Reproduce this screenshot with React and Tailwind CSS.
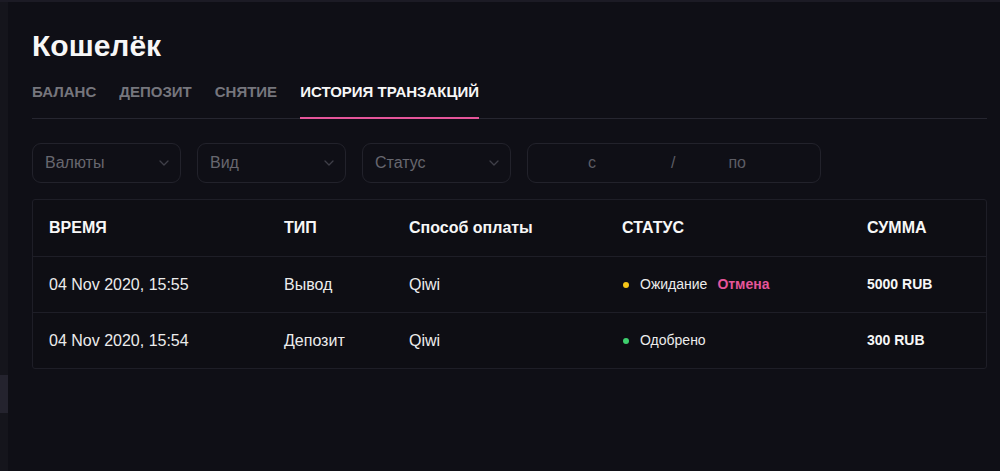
import React from "react";

function Chevron() {
  return (
    <svg width="10" height="6" viewBox="0 0 10 6" fill="none" className="shrink-0">
      <path d="M1 1l4 4 4-4" stroke="#3f3f48" strokeWidth="1.3" strokeLinecap="round" strokeLinejoin="round" />
    </svg>
  );
}

function Select({ label }) {
  return (
    <div className="w-[149px] h-10 rounded-[9px] border border-[#22222b] flex items-center justify-between pl-3 pr-[11px]">
      <span className="text-[16px] text-[#67676f]">{label}</span>
      <Chevron />
    </div>
  );
}

const rows = [
  { time: "04 Nov 2020, 15:55", type: "Вывод", method: "Qiwi", status: "Ожидание", dot: "bg-[#f5c518]", cancel: true, sum: "5000 RUB" },
  { time: "04 Nov 2020, 15:54", type: "Депозит", method: "Qiwi", status: "Одобрено", dot: "bg-[#3ecf6e]", cancel: false, sum: "300 RUB" },
];

export default function App() {
  return (
    <div
      className="w-[1000px] h-[471px] bg-[#0f0f16] flex flex-col overflow-hidden"
      style={{ fontFamily: '"Liberation Sans", Arial, sans-serif' }}
    >
      <div className="h-[2px] bg-[#1c1b25] shrink-0" />
      <div className="flex flex-1">
        <div className="w-2 bg-[#15151c] flex flex-col">
          <div className="h-[373px]" />
          <div className="h-[38px] bg-[#24232e]" />
        </div>
        <div className="flex-1 pl-6 pr-[13px]">
          <h1 className="mt-[29px] text-[30px] leading-[30px] font-bold text-[#f7f7f7]">Кошелёк</h1>
          <div className="mt-[21px] flex gap-[23px] border-b border-[#262630]">
            {["БАЛАНС", "ДЕПОЗИТ", "СНЯТИЕ"].map((t) => (
              <div key={t} className="text-[15px] leading-5 font-bold text-[#76767d] pb-4">{t}</div>
            ))}
            <div className="text-[15px] leading-5 font-bold text-[#f7f7f7] pb-[14px] border-b-2 border-[#e5559a] -mb-px">ИСТОРИЯ ТРАНЗАКЦИЙ</div>
          </div>
          <div className="mt-6 flex gap-4">
            <Select label="Валюты" />
            <Select label="Вид" />
            <Select label="Статус" />
            <div className="w-[294px] h-10 rounded-[9px] border border-[#22222b] flex items-center text-[16px] text-[#5d5d65]">
              <span className="ml-[60px]">с</span>
              <span className="ml-[75px]">/</span>
              <span className="ml-[53px]">по</span>
            </div>
          </div>
          <div className="mt-4 w-[955px] rounded-[3px] border border-[#1e1e27] bg-[#0e0e14]">
            <div className="grid grid-cols-[235px_125px_213px_245px_1fr] px-4 h-14 items-center text-[16px] font-bold text-[#f7f7f7]">
              <div>ВРЕМЯ</div>
              <div>ТИП</div>
              <div>Способ оплаты</div>
              <div>СТАТУС</div>
              <div>СУММА</div>
            </div>
            {rows.map((r) => (
              <div key={r.time} className="grid grid-cols-[235px_125px_213px_245px_1fr] px-4 h-14 items-center border-t border-[#1e1e27] text-[#ececec]">
                <div className="text-[16px]">{r.time}</div>
                <div className="text-[16px]">{r.type}</div>
                <div className="text-[16px]">{r.method}</div>
                <div className="flex items-center text-[14px]">
                  <span className={`w-[6px] h-[6px] rounded-full ${r.dot} ml-px mr-[11px]`} />
                  <span>{r.status}</span>
                  {r.cancel && <span className="ml-[10px] font-bold text-[#e5559a]">Отмена</span>}
                </div>
                <div className="text-[14px] font-bold text-[#f7f7f7]">{r.sum}</div>
              </div>
            ))}
          </div>
        </div>
      </div>
    </div>
  );
}
